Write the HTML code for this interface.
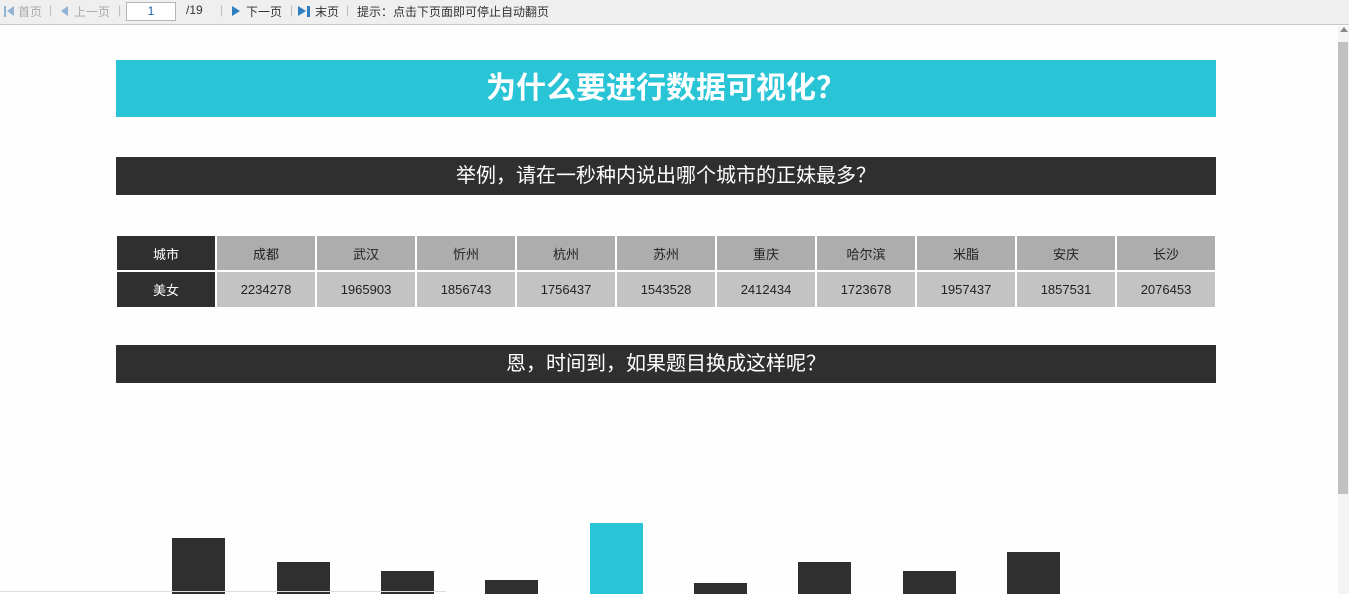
<!DOCTYPE html>
<html><head><meta charset="utf-8"><style>
*{margin:0;padding:0;box-sizing:border-box}
body{width:1349px;height:594px;overflow:hidden;background:#fefefe;font-family:"Liberation Sans","Microsoft YaHei","Noto Sans CJK SC",sans-serif;position:relative}
.tb{position:absolute;left:0;top:0;width:1349px;height:25px;background:#efefef;border-bottom:1px solid #c8c8c8;font-size:12px;color:#333}
.tb span{position:absolute;top:3px;white-space:nowrap}
.dis{color:#aaa}
.sep{color:#bbb}
.inp{position:absolute;left:126px;top:2px;width:50px;height:19px;background:#fff;border:1px solid #b5b5b5;font-size:12px;text-align:center;line-height:17px;color:#1a5fa8}
.tri{position:absolute;width:0;height:0;border-top:5px solid transparent;border-bottom:5px solid transparent}
.bar{position:absolute;left:116px;width:1100px;color:#fff;text-align:center;font-family:"Liberation Sans","Noto Sans CJK SC",sans-serif}
table{position:absolute;left:116px;top:236px;border-collapse:separate;border-spacing:2px 0;margin-left:-1px}
td{width:98px;text-align:center;font-size:13px;color:#222}
tr.h td{height:34px;background:#adadad}
tr.d td{height:37px;background:#c3c3c3;border-top:2px solid #fff}
td.k{background:#2f2f2f!important;color:#fff}
.b{position:absolute;width:53px;bottom:0;background:#2f2f2f}
</style></head><body>
<div class="tb">
<div style="position:absolute;left:4px;top:6px;width:2px;height:11px;background:#8fb3d0"></div>
<div class="tri" style="left:7px;top:6px;border-right:7px solid #8fb3d0"></div>
<span class="dis" style="left:18px">首页</span><span class="sep" style="left:49px">|</span>
<div class="tri" style="left:61px;top:6px;border-right:7px solid #8fb3d0"></div>
<span class="dis" style="left:74px">上一页</span><span class="sep" style="left:118px">|</span>
<div class="inp">1</div>
<span style="left:186px">/19</span><span class="sep" style="left:220px">|</span>
<div class="tri" style="left:232px;top:6px;border-left:8px solid #2d7dc0"></div>
<span style="left:246px">下一页</span><span class="sep" style="left:290px">|</span>
<div class="tri" style="left:298px;top:6px;border-left:8px solid #2d7dc0"></div>
<div style="position:absolute;left:307px;top:6px;width:3px;height:11px;background:#2d7dc0"></div>
<span style="left:315px">末页</span><span class="sep" style="left:346px">|</span>
<span style="left:357px">提示：点击下页面即可停止自动翻页</span>
</div>
<div style="position:absolute;left:1338px;top:26px;width:11px;height:568px;background:#f4f4f4"></div>
<div class="tri" style="left:1340px;top:27px;border:none;border-left:4px solid transparent;border-right:4px solid transparent;border-bottom:5px solid #888"></div>
<div style="position:absolute;left:1338px;top:42px;width:10px;height:452px;background:#c1c1c1"></div>
<div class="bar" style="top:60px;height:57px;background:#29c5d6;font-size:30px;font-weight:bold;line-height:57px">为什么要进行数据可视化？</div>
<div class="bar" style="top:157px;height:38px;background:#2f2f2f;font-size:20px;line-height:38px">举例，请在一秒种内说出哪个城市的正妹最多？</div>
<table>
<tr class="h"><td class="k">城市</td><td>成都</td><td>武汉</td><td>忻州</td><td>杭州</td><td>苏州</td><td>重庆</td><td>哈尔滨</td><td>米脂</td><td>安庆</td><td>长沙</td></tr>
<tr class="d"><td class="k">美女</td><td>2234278</td><td>1965903</td><td>1856743</td><td>1756437</td><td>1543528</td><td>2412434</td><td>1723678</td><td>1957437</td><td>1857531</td><td>2076453</td></tr>
</table>
<div class="bar" style="top:345px;height:38px;background:#2f2f2f;font-size:20px;line-height:38px">恩，时间到，如果题目换成这样呢？</div>
<div class="b" style="left:172px;top:538px"></div>
<div class="b" style="left:277px;top:562px"></div>
<div class="b" style="left:381px;top:571px"></div>
<div class="b" style="left:485px;top:580px"></div>
<div class="b" style="left:590px;top:523px;background:#29c5d6"></div>
<div class="b" style="left:694px;top:583px"></div>
<div class="b" style="left:798px;top:562px"></div>
<div class="b" style="left:903px;top:571px"></div>
<div class="b" style="left:1007px;top:552px"></div>
<div style="position:absolute;left:0;top:591px;width:446px;height:1px;background:#ddd"></div>
</body></html>
